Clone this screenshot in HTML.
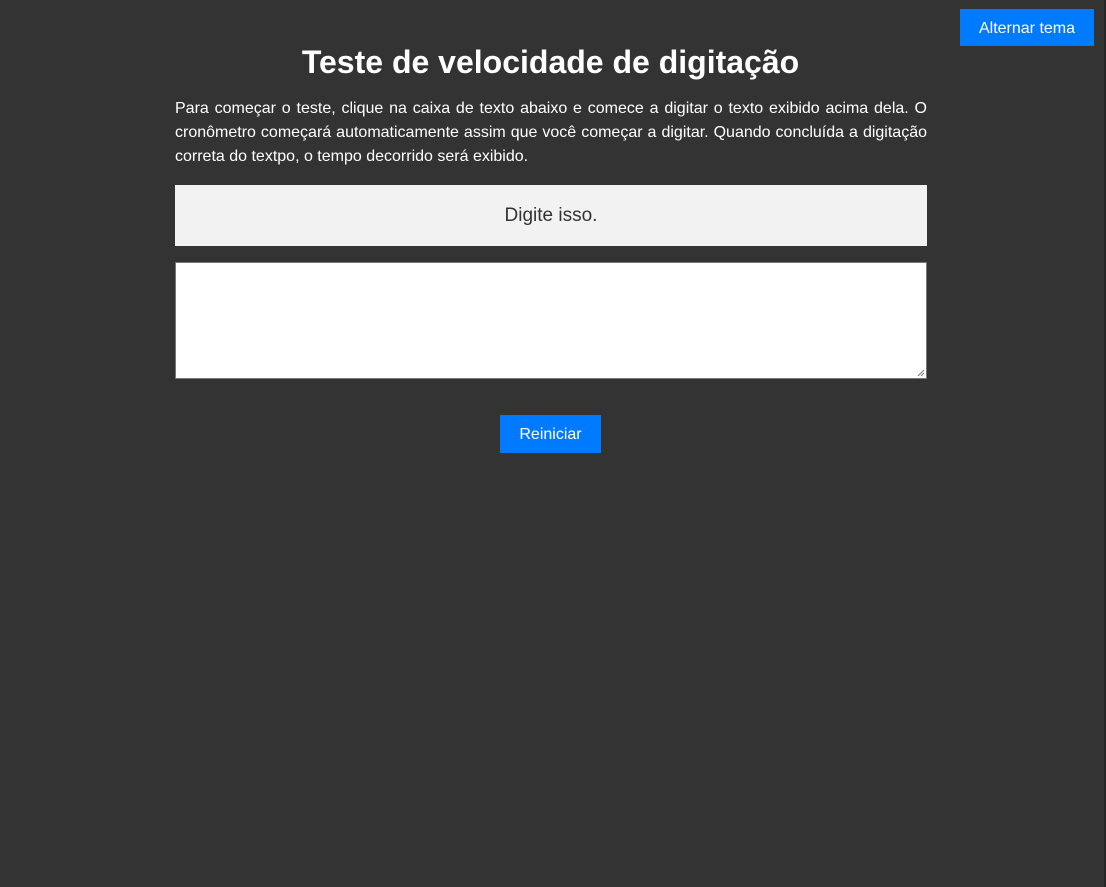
<!DOCTYPE html>
<html><head><meta charset="utf-8"><style>
html,body{margin:0;padding:0;}
body{width:1106px;height:887px;background:#333;position:relative;overflow:hidden;font-family:"Liberation Sans",Arial,sans-serif;color:#fff;}
.edge{position:absolute;left:1104px;top:0;width:2px;height:887px;background:#262626;}
.btn{position:absolute;background:#007bff;color:#fff;font-size:16px;text-align:center;}
h1{position:absolute;left:0;width:1101px;top:43px;margin:0;text-align:center;font-size:32px;font-weight:bold;line-height:38px;}
p{position:absolute;left:175px;width:752px;top:97px;margin:0;font-size:16px;line-height:24px;text-align:justify;}
.quote{position:absolute;left:175px;top:185px;width:752px;height:61px;background:#f2f2f2;color:#333;font-size:19px;line-height:62px;text-align:center;}
.ta{position:absolute;left:175px;top:262px;width:750px;height:115px;background:#fff;border:1px solid #767676;}
</style></head><body>
<div class="edge"></div>
<div class="btn" style="left:960px;top:9px;width:134px;height:37px;line-height:39px;">Alternar tema</div>
<h1>Teste de velocidade de digitação</h1>
<p>Para começar o teste, clique na caixa de texto abaixo e comece a digitar o texto exibido acima dela. O cronômetro começará automaticamente assim que você começar a digitar. Quando concluída a digitação correta do textpo, o tempo decorrido será exibido.</p>
<div class="quote">Digite isso.</div>
<div class="ta"><svg style="position:absolute;right:1px;bottom:1px" width="8" height="8"><path d="M7 1L1 7M7 4L4 7" stroke="#777" stroke-width="1"/></svg></div>
<div class="btn" style="left:500px;top:415px;width:101px;height:38px;line-height:40px;">Reiniciar</div>
</body></html>
